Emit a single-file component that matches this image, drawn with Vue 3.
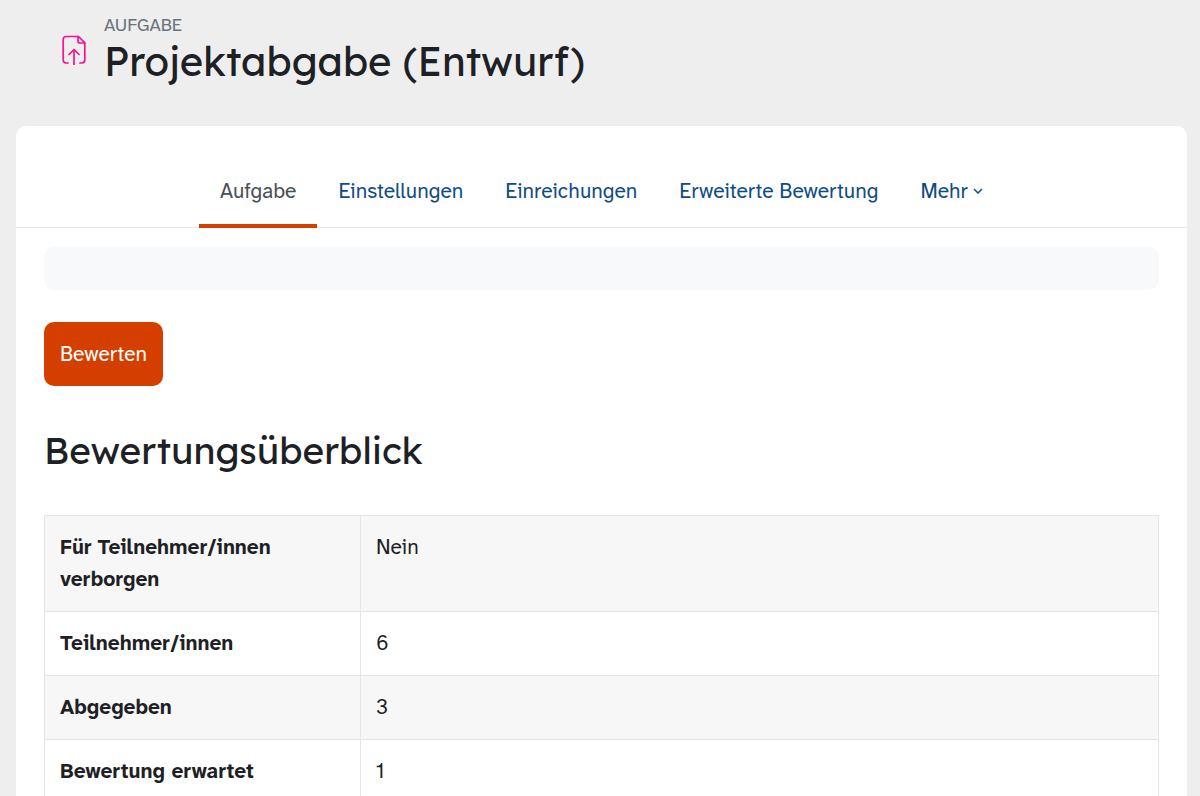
<template>
  <div class="page">
    <header class="page-header">
      <svg class="activity-icon" viewBox="0 0 24 30" fill="none" aria-hidden="true">
        <path d="M6 28H4.200Q1.200 28 1.200 25V4.500Q1.200 1.500 4.200 1.500H16.500L22.800 7.800V25Q22.800 28 19.800 28H18" />
        <path d="M16 1.500V6Q16 8 18 8H22.800" />
        <path d="M12 29.500V14.500M7 19.500L12 14.500L17 19.500" />
      </svg>
      <div>
        <div class="activity-type">Aufgabe</div>
        <h1>Projektabgabe (Entwurf)</h1>
      </div>
    </header>

    <main class="card">
      <nav class="tabs">
        <a
          v-for="tab in tabs"
          :key="tab"
          href="#"
          class="tab"
          :class="{ active: tab === activeTab }"
          @click.prevent="activeTab = tab"
        >{{ tab }}</a>
        <button type="button" class="tab more">
          Mehr
          <svg class="chevron" viewBox="0 0 10 6" fill="none" aria-hidden="true">
            <path d="M1 1L5 5L9 1" />
          </svg>
        </button>
      </nav>

      <div class="content">
        <div class="activity-info"></div>
        <button type="button" class="btn-primary">Bewerten</button>
        <h2>Bewertungsüberblick</h2>
        <table class="summary">
          <tbody>
            <tr v-for="row in rows" :key="row.label">
              <th scope="row">{{ row.label }}</th>
              <td>{{ row.value }}</td>
            </tr>
          </tbody>
        </table>
      </div>
    </main>
  </div>
</template>

<script setup>
import { ref } from 'vue';

const tabs = ['Aufgabe', 'Einstellungen', 'Einreichungen', 'Erweiterte Bewertung'];
const activeTab = ref('Aufgabe');

const rows = [
  { label: 'Für Teilnehmer/innen verborgen', value: 'Nein' },
  { label: 'Teilnehmer/innen', value: '6' },
  { label: 'Abgegeben', value: '3' },
  { label: 'Bewertung erwartet', value: '1' },
];
</script>

<style>
body {
  margin: 0;
  background: #eeeeee;
}
</style>

<style scoped>
.page {
  box-sizing: border-box;
  height: 100vh;
  overflow: hidden;
  display: flex;
  flex-direction: column;
  padding: 0 13px 0 16px;
  color: #1d2125;
  font-family: "Atkinson Hyperlegible Next", "Atkinson Hyperlegible", Inter, "Liberation Sans", sans-serif;
  font-size: 21px;
  line-height: 32px;
}

.page-header {
  display: flex;
  align-items: flex-start;
  gap: 18px;
  padding: 13px 46px 41px;
}

.activity-icon {
  width: 24px;
  height: 30px;
  margin-top: 22px;
  stroke: #f7138f;
  stroke-width: 1.700;
  stroke-linecap: round;
  stroke-linejoin: round;
}

.activity-type {
  color: #6a737b;
  font-size: 18px;
  line-height: 24px;
  text-transform: uppercase;
}

h1,
h2 {
  margin: 0;
  font-family: Lexend, Inter, sans-serif;
  font-weight: 400;
  line-height: 48px;
}

h1 {
  font-size: 40px;
}

h2 {
  margin: 40px 0 41px;
  font-size: 37px;
}

.card {
  flex: 1;
  background: #ffffff;
  border-radius: 10px 10px 0 0;
}

.tabs {
  display: flex;
  justify-content: center;
  padding-top: 32px;
  border-bottom: 1px solid #e6e7e9;
}

.tab {
  margin-bottom: -1px;
  padding: 17px 21px;
  border: 0;
  border-bottom: 4px solid transparent;
  background: none;
  color: #0f4c85;
  font: inherit;
  text-decoration: none;
  cursor: pointer;
}

.tab.active {
  border-color: #d43f00;
  color: #495057;
}

.more {
  display: flex;
  align-items: center;
  gap: 5px;
}

.chevron {
  width: 10px;
  height: 6px;
  stroke: currentColor;
  stroke-width: 1.500;
}

.content {
  padding: 19px 28px;
}

.activity-info {
  height: 43px;
  margin-bottom: 32px;
  border-radius: 10px;
  background: #f8f9fb;
}

.btn-primary {
  display: block;
  padding: 16px;
  border: 0;
  border-radius: 10px;
  background: #d43f00;
  color: #ffffff;
  font: inherit;
  cursor: pointer;
}

.summary {
  width: 100%;
  border-collapse: collapse;
}

.summary tr:nth-child(odd) {
  background: #f7f7f7;
}

.summary th,
.summary td {
  padding: 15px 15px 16px;
  border: 1px solid #e3e6e9;
  text-align: left;
  vertical-align: top;
}

.summary th {
  width: 285px;
  font-weight: 700;
}
</style>
